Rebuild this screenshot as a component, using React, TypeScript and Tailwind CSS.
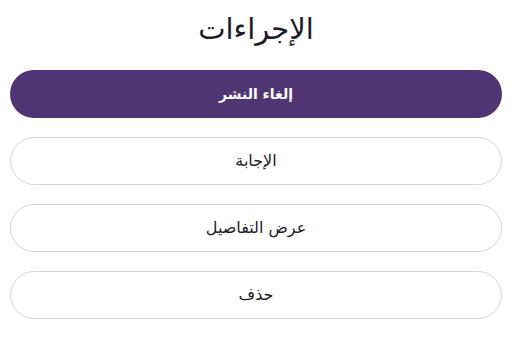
import React from "react";

const actions = ["الإجابة", "عرض التفاصيل", "حذف"];

const App = () => {
  return (
    <div
      dir="rtl"
      className="min-h-[337px] bg-white pl-[10px] pr-[12px] pt-[10px]"
      style={{ fontFamily: '"DejaVu Sans", "Noto Sans", sans-serif' }}
    >
      <h1 className="h-[38px] text-center text-[29px] leading-[38px] text-[#1c1b29]">
        الإجراءات
      </h1>
      <div className="mt-[22px] flex flex-col gap-[19px]">
        <button className="h-[48px] w-full rounded-full bg-[#4f3573] text-[14px] font-bold text-white">
          إلغاء النشر
        </button>
        {actions.map((a) => (
          <button
            key={a}
            className="h-[48px] w-full rounded-full border border-[#d6d5de] bg-white text-[16px] text-[#1c1b29]"
          >
            {a}
          </button>
        ))}
      </div>
    </div>
  );
};

export default App;
